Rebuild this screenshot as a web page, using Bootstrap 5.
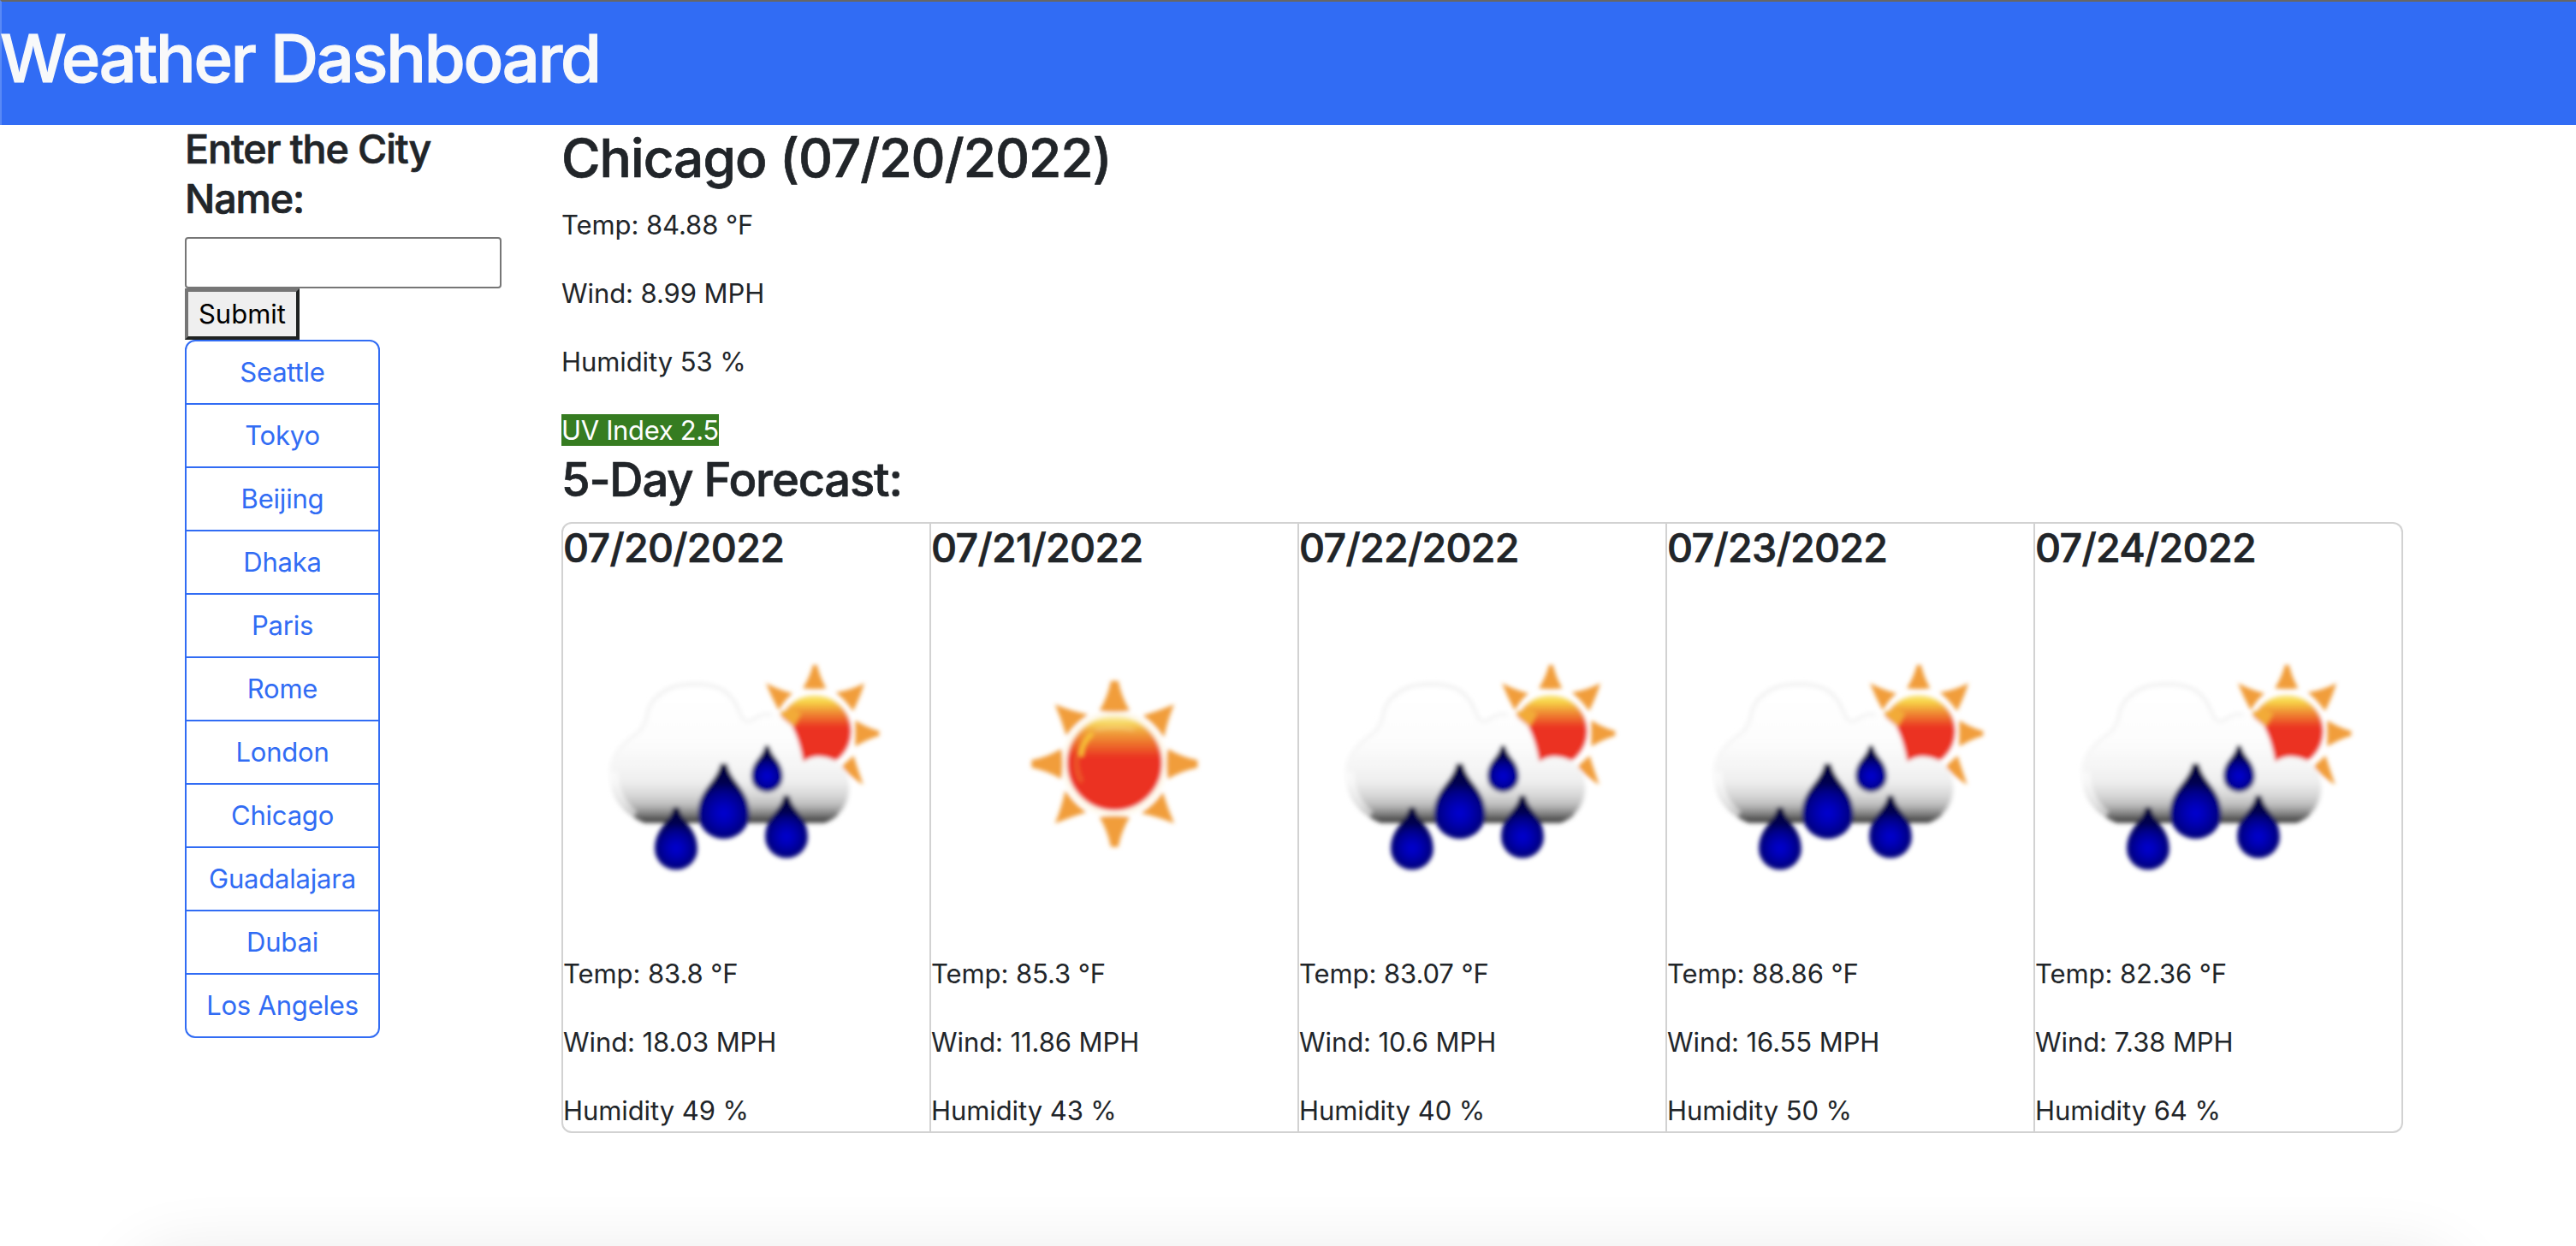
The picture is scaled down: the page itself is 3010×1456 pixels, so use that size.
<!DOCTYPE html>
<html lang="en">
<head>
<meta charset="utf-8">
<title>Weather Dashboard</title>
<meta name="viewport" content="width=device-width, initial-scale=1">
<link href="https://cdn.jsdelivr.net/npm/bootstrap@5.3.0/dist/css/bootstrap.min.css" rel="stylesheet">
<style>
  :root { font-size: 32px; --brand: #316cf4; }
  body {
    font-family: Inter, "Liberation Sans", sans-serif;
    font-size: 31px; line-height: 48px; letter-spacing: -.08px;
    color: #212529; overflow: hidden; height: 1456px;
  }
  h1, h2, h3, h4 { letter-spacing: -1.1px; font-weight: 500; -webkit-text-stroke: .7px currentColor; }
  .page-head { background: var(--brand); border-top: 2px solid #666; border-left: 2px solid #5989f6; height: 146px; padding-top: 18px; }
  .page-head h1 { font-size: 77.6px; line-height: 96px; letter-spacing: -2.22px; margin-left: -2px; -webkit-text-stroke-width: 1.2px; }
  .page-body { width: 2640px; max-width: none; margin-left: 192px; }
  .page-body h2 { font-size: 62.1px; line-height: 76.8px; letter-spacing: -.97px; padding-top: 1px; margin-bottom: 15px; }
  .page-body h3 { font-size: 54.3px; line-height: 67.2px; letter-spacing: -1.16px; }
  .page-body h4 { font-size: 46.6px; line-height: 57.6px; }
  .city-input { width: 370px; height: 60px; border: 2px solid #767676; border-radius: 4px; background: #fff; }
  .city-submit {
    width: 134px; height: 60px; padding: 0; color: #000; background: #efefef;
    border: 4px solid; border-color: #767676 #1f2221 #1f2221 #767676; line-height: 48px;
  }
  .city-list { width: 228px; }
  .city-list .btn {
    --bs-btn-color: var(--brand); --bs-btn-border-color: var(--brand); --bs-btn-border-width: 2px;
    --bs-btn-font-size: 31px; --bs-btn-line-height: 48px; --bs-btn-padding-x: 0; --bs-btn-padding-y: 12px;
    --bs-btn-border-radius: 12px; letter-spacing: -.2px; height: 76px; line-height: 48px;
  }
  .city-list.btn-group-vertical > .btn:not(:first-child) { margin-top: -2px; }
  .uv-low { background: #367c21; color: #fff; letter-spacing: -.35px; }
  .forecast .card { --bs-card-border-width: 2px; --bs-card-border-color: #d2d2d2; --bs-card-border-radius: 12px; }
  .forecast h4 { letter-spacing: -.7px; }
  .forecast svg { display: block; width: 100%; aspect-ratio: 1; }
  .bottom-shade {
    position: fixed; top: calc(100% + 8px); left: 150px; right: 136px; height: 300px; border-radius: 60px;
    box-shadow: 0 0 80px rgba(0,0,0,.09); pointer-events: none;
  }
</style>
</head>
<body>
<svg width="0" height="0" class="position-absolute" aria-hidden="true">
  <defs>
    <filter id="soft" x="-10%" y="-10%" width="120%" height="120%"><feGaussianBlur stdDeviation="8"/></filter>
    <linearGradient id="discBig" x1="0" x2="0" y1="700" y2="1045" gradientUnits="userSpaceOnUse">
      <stop offset="0" stop-color="#fdf6cc"/><stop offset=".1" stop-color="#f7d85f"/><stop offset=".18" stop-color="#f1a53d"/>
      <stop offset=".31" stop-color="#ed6f2b"/><stop offset=".45" stop-color="#eb3323"/>
    </linearGradient>
    <linearGradient id="discSmall" x1="0" x2="0" y1="630" y2="885" gradientUnits="userSpaceOnUse">
      <stop offset="0" stop-color="#fbe98a"/><stop offset=".1" stop-color="#f8d94a"/><stop offset=".22" stop-color="#f1a038"/>
      <stop offset=".35" stop-color="#ed662b"/><stop offset=".47" stop-color="#eb3323"/>
    </linearGradient>
    <linearGradient id="cloudFill" x1="0" x2="0" y1="590" y2="1085" gradientUnits="userSpaceOnUse">
      <stop offset="0" stop-color="#fff"/><stop offset=".4" stop-color="#fdfdfd"/><stop offset=".6" stop-color="#f5f5f5"/>
      <stop offset=".7" stop-color="#efefef"/><stop offset=".8" stop-color="#d8d8d8"/><stop offset=".87" stop-color="#bcbcbc"/>
      <stop offset=".93" stop-color="#858585"/><stop offset=".98" stop-color="#484848"/>
    </linearGradient>
    <linearGradient id="cloudEdge" x1="0" x2="0" y1="590" y2="1085" gradientUnits="userSpaceOnUse">
      <stop offset="0" stop-color="#f2f2f2"/><stop offset=".6" stop-color="#f7f7f7"/><stop offset=".75" stop-color="#fff" stop-opacity="0"/>
    </linearGradient>
    <radialGradient id="dropFill" cx="0" cy="10" r="190" gradientUnits="userSpaceOnUse">
      <stop offset="0" stop-color="#0000d2"/><stop offset=".17" stop-color="#0000b8"/><stop offset=".4" stop-color="#000088"/>
      <stop offset=".55" stop-color="#000050"/><stop offset="1" stop-color="#000030"/>
    </radialGradient>
    <symbol id="drop" overflow="visible">
      <path fill="url(#dropFill)" d="M-12-164H12C26-96 90-76 90 12A90 88 0 0 1-90 12C-90-76-26-96-12-164Z"/>
    </symbol>
    <path id="ray" fill="#f19d3a" d="M654 586H680Q692 645 720 690Q667 698 614 690Q642 645 654 586Z"/>
    <path id="rayDiag" fill="#f19d3a" d="M458 668Q510 690 574 704Q525 735 498 778Q480 720 458 668Z"/>

    <symbol id="sun" viewBox="24 257 1284 1284">
      <g filter="url(#soft)">
        <circle cx="667" cy="876" r="185" fill="#fdf0cf" opacity=".4"/>
        <use href="#ray"/><use href="#ray" transform="rotate(90 667 877)"/>
        <use href="#ray" transform="rotate(180 667 877)"/><use href="#ray" transform="rotate(270 667 877)"/>
        <use href="#rayDiag"/><use href="#rayDiag" transform="rotate(90 667 877)"/>
        <use href="#rayDiag" transform="rotate(180 667 877)"/><use href="#rayDiag" transform="rotate(270 667 877)"/>
        <circle cx="667" cy="874" r="167" fill="url(#discBig)" stroke="#fff" stroke-opacity=".6" stroke-width="5"/>
        <path d="M548 850Q552 800 590 770" fill="none" stroke="#f7c638" stroke-width="16"/>
        <path d="M535 850Q528 900 552 940" fill="none" stroke="#ed6a2c" stroke-width="16" opacity=".7"/>
        <path d="M600 758Q667 742 735 758" fill="none" stroke="#f7dc9c" stroke-width="8" opacity=".5"/>
      </g>
    </symbol>

    <symbol id="rain" viewBox="24 257 1284 1284">
      <g filter="url(#soft)">
        <g fill="#f19d3a">
          <path d="M900 530H914Q925 575 946 612Q908 618 864 612Q888 575 900 530Z"/>
          <path d="M735 594Q780 618 828 630Q798 655 780 690Q755 645 735 594Z"/>
          <path d="M1080 594Q1035 618 980 627Q1015 655 1040 692Q1065 645 1080 594Z"/>
          <path d="M1132 762V778Q1090 790 1048 816V724Q1090 750 1132 762Z"/>
          <path d="M1076 950Q1035 925 1000 886L1042 848Q1060 905 1076 950Z"/>
        </g>
        <circle cx="906" cy="762" r="128" fill="url(#discSmall)" stroke="#fff" stroke-opacity=".5" stroke-width="5"/>
        <path d="M780 700L832 748L860 700L820 680Z" fill="#f2ab38"/>
        <path d="M310 1084C225 1050 188 985 188 905C192 840 240 800 285 768C325 735 310 690 340 655C385 605 430 597 490 597C570 597 615 625 640 690C655 725 665 738 690 722C715 700 750 690 778 704L826 744C850 790 858 830 866 868Q920 832 990 872L1000 890C1050 940 1040 1050 940 1084Z" fill="url(#cloudFill)"/>
        <path d="M300 1080C215 1050 188 975 190 905C194 840 240 800 285 768C325 735 310 690 340 655C385 605 430 597 490 597C570 597 615 625 640 690C655 725 665 738 690 722C712 704 735 700 755 704" fill="none" stroke="url(#cloudEdge)" stroke-width="14"/>
        <path d="M205 905Q205 1000 275 1055" fill="none" stroke="#fff" stroke-width="26" opacity=".55"/>
        <path d="M1030 930Q1036 1010 990 1055" fill="none" stroke="#fff" stroke-width="14" opacity=".45"/>
        <use href="#drop" transform="translate(587 1040)"/>
        <use href="#drop" transform="translate(739 914) scale(.62)"/>
        <use href="#drop" transform="translate(420 1165) scale(.83)"/>
        <use href="#drop" transform="translate(807 1124) scale(.83)"/>
      </g>
    </symbol>
  </defs>
</svg>

<header class="page-head text-light">
  <h1 class="mb-0">Weather Dashboard</h1>
</header>

<main class="container page-body">
  <div class="row">
    <aside class="col-2">
      <h4 class="mb-2">Enter the City<br>Name:</h4>
      <input type="text" class="city-input d-block" aria-label="City name">
      <button type="submit" class="city-submit d-block">Submit</button>
      <div class="btn-group-vertical city-list d-flex" role="group">
        <button type="button" class="btn btn-outline-primary">Seattle</button>
        <button type="button" class="btn btn-outline-primary">Tokyo</button>
        <button type="button" class="btn btn-outline-primary">Beijing</button>
        <button type="button" class="btn btn-outline-primary">Dhaka</button>
        <button type="button" class="btn btn-outline-primary">Paris</button>
        <button type="button" class="btn btn-outline-primary">Rome</button>
        <button type="button" class="btn btn-outline-primary">London</button>
        <button type="button" class="btn btn-outline-primary">Chicago</button>
        <button type="button" class="btn btn-outline-primary">Guadalajara</button>
        <button type="button" class="btn btn-outline-primary">Dubai</button>
        <button type="button" class="btn btn-outline-primary">Los Angeles</button>
      </div>
    </aside>

    <section class="col-10">
      <h2>Chicago (07/20/2022)</h2>
      <p>Temp: 84.88 °F</p>
      <p>Wind: 8.99 MPH</p>
      <p>Humidity 53 %</p>
      <div><span class="uv-low">UV Index 2.5</span></div>
      <h3 class="mb-2">5-Day Forecast:</h3>
      <div class="card-group forecast">
        <div class="card">
          <h4 class="mb-2">07/20/2022</h4>
          <svg role="img" aria-label="Rain"><use href="#rain"/></svg>
          <p>Temp: 83.8 °F</p><p>Wind: 18.03 MPH</p><p class="mb-0">Humidity 49 %</p>
        </div>
        <div class="card">
          <h4 class="mb-2">07/21/2022</h4>
          <svg role="img" aria-label="Clear"><use href="#sun"/></svg>
          <p>Temp: 85.3 °F</p><p>Wind: 11.86 MPH</p><p class="mb-0">Humidity 43 %</p>
        </div>
        <div class="card">
          <h4 class="mb-2">07/22/2022</h4>
          <svg role="img" aria-label="Rain"><use href="#rain"/></svg>
          <p>Temp: 83.07 °F</p><p>Wind: 10.6 MPH</p><p class="mb-0">Humidity 40 %</p>
        </div>
        <div class="card">
          <h4 class="mb-2">07/23/2022</h4>
          <svg role="img" aria-label="Rain"><use href="#rain"/></svg>
          <p>Temp: 88.86 °F</p><p>Wind: 16.55 MPH</p><p class="mb-0">Humidity 50 %</p>
        </div>
        <div class="card">
          <h4 class="mb-2">07/24/2022</h4>
          <svg role="img" aria-label="Rain"><use href="#rain"/></svg>
          <p>Temp: 82.36 °F</p><p>Wind: 7.38 MPH</p><p class="mb-0">Humidity 64 %</p>
        </div>
      </div>
    </section>
  </div>
</main>
<div class="bottom-shade"></div>
<script src="https://cdn.jsdelivr.net/npm/bootstrap@5.3.0/dist/js/bootstrap.bundle.min.js"></script>
</body>
</html>
